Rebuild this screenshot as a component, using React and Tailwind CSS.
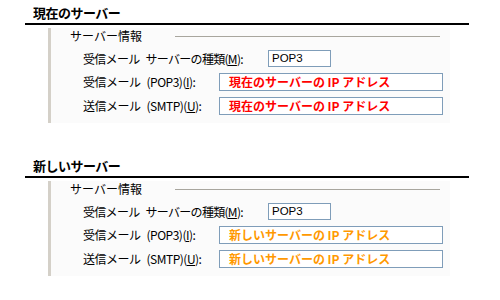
import React from "react";

const jp = { fontFamily: '"Noto Sans CJK JP", "Noto Sans", sans-serif' };

function U({ children }) {
  return <span className="underline underline-offset-[1px]">{children}</span>;
}

function Sp() {
  return <span className="inline-block w-[6px]" />;
}

function Section({ title, color, ipText }) {
  return (
    <div className="w-[500px]" style={jp}>
      <div className="h-[23px] pt-[5px] pl-[33px] text-[13px] leading-[16px] font-bold text-black tracking-[-0.5px]">
        {title}
      </div>
      <div className="ml-[25px] w-[444px] border-t-2 border-black" />
      <div className="mt-[3px] ml-[48px] w-[402px] h-[95px] border-l-[3px] border-[#d4d0c8] bg-[#fbfbfb] text-[12px] text-black">
        <div className="flex h-[16px] items-center">
          <div className="w-[124px] pl-[19px] leading-[16px]">サーバー情報</div>
          <div className="flex-1 mr-[10px] h-px bg-[#a8a69e]" />
        </div>
        <div className="mt-[6px] flex h-[17px] items-center">
          <div className="w-[217px] pl-[32px] leading-[16px] tracking-[-0.7px] whitespace-nowrap">
            受信メール<Sp />サーバーの種類(<U>M</U>):
          </div>
          <div
            className="w-[63px] h-[17px] border border-[#7f9db9] bg-white pl-[3px] text-[11.5px] leading-[15px]"
            style={{ fontFamily: '"Liberation Sans", Arial, sans-serif' }}
          >
            POP3
          </div>
        </div>
        <div className="mt-[6px] flex h-[18px] items-center">
          <div className="w-[168px] pl-[32px] leading-[16px] tracking-[-0.5px] whitespace-nowrap">
            受信メール<Sp />(POP3)(<U>I</U>):
          </div>
          <div
            className="w-[224px] h-[18px] border border-[#7f9db9] bg-white pl-[9px] text-[12px] leading-[16px] font-bold whitespace-nowrap"
            style={{ color }}
          >
            {ipText}
          </div>
        </div>
        <div className="mt-[6px] flex h-[18px] items-center">
          <div className="w-[168px] pl-[32px] leading-[16px] tracking-[-0.5px] whitespace-nowrap">
            送信メール<Sp />(SMTP)(<U>U</U>):
          </div>
          <div
            className="w-[224px] h-[18px] border border-[#7f9db9] bg-white pl-[9px] text-[12px] leading-[16px] font-bold whitespace-nowrap"
            style={{ color }}
          >
            {ipText}
          </div>
        </div>
      </div>
    </div>
  );
}

export default function App() {
  return (
    <div className="w-[500px] h-[300px] bg-white overflow-hidden">
      <Section title="現在のサーバー" color="#ff0000" ipText="現在のサーバーの IP アドレス" />
      <div className="h-[30px]" />
      <Section title="新しいサーバー" color="#ff9900" ipText="新しいサーバーの IP アドレス" />
    </div>
  );
}
